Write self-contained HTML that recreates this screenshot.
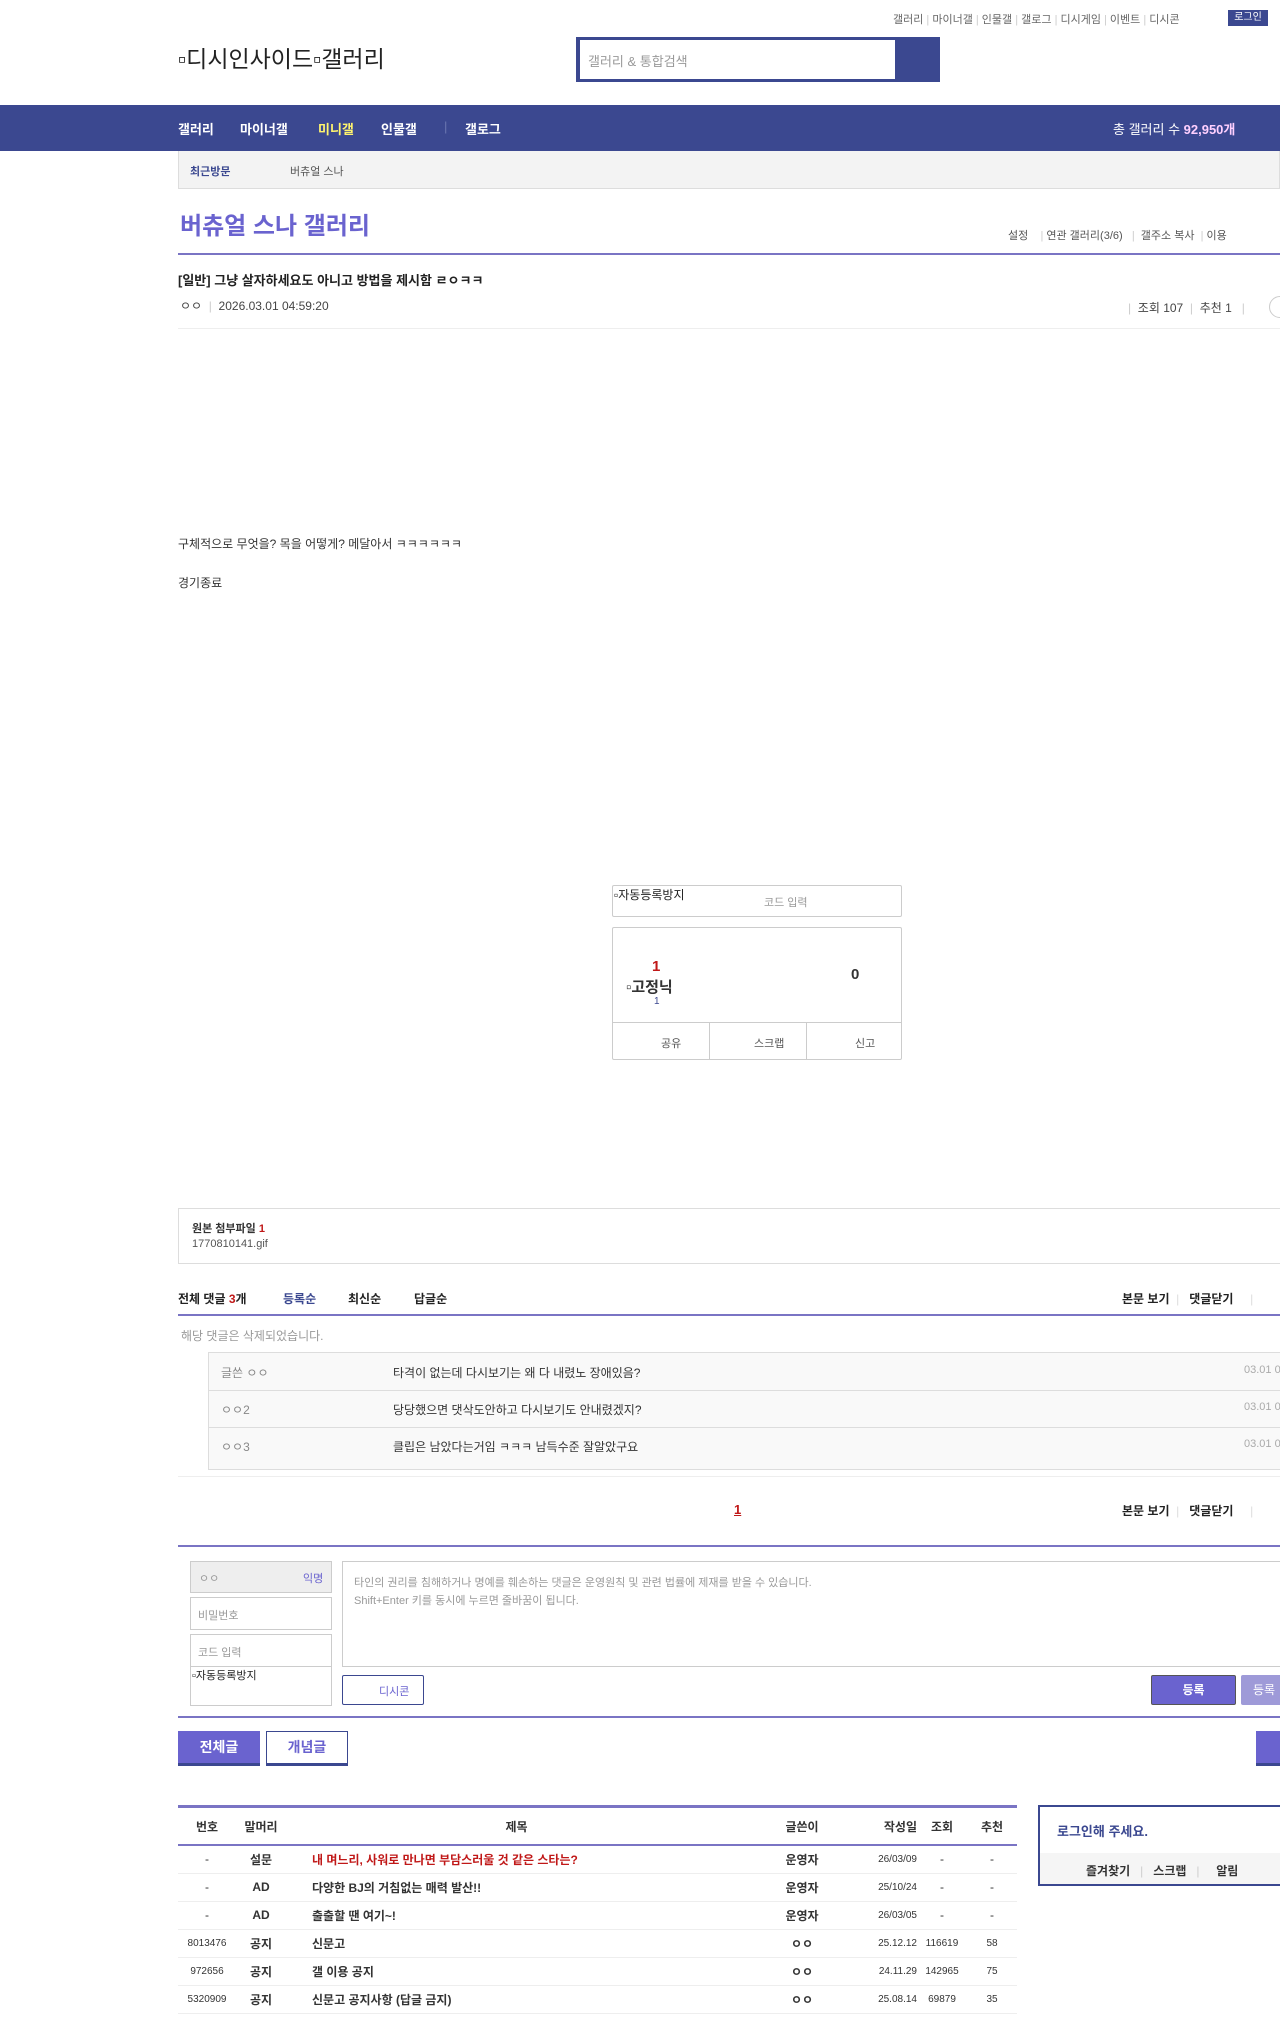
<!DOCTYPE html>
<html><head><meta charset="utf-8"><style>
*{margin:0;padding:0;box-sizing:border-box}
body{width:1280px;height:2026px;overflow:hidden;background:#fff;font-family:"Liberation Sans","Noto Sans CJK KR",sans-serif;color:#333;font-size:12px;position:relative}
.a{position:absolute;white-space:nowrap}
.nav{background:#3b4890;top:105px;left:0;width:1280px;height:46px}
.nav span{position:absolute;top:14px;color:#fff;font-weight:bold;font-size:13px}
.tbl td{height:28px;border-bottom:1px solid #eee;font-size:12px;text-align:center}
</style></head><body>
<div class="a" style="top:11px;left:893px;font-size:11px;color:#666">갤러리 <span style="color:#ccc">|</span> 마이너갤 <span style="color:#ccc">|</span> 인물갤 <span style="color:#ccc">|</span> 갤로그 <span style="color:#ccc">|</span> 디시게임 <span style="color:#ccc">|</span> 이벤트 <span style="color:#ccc">|</span> 디시콘</div>
<div class="a" style="top:10px;left:1228px;width:40px;height:16px;background:#3b4890;color:#fff;font-size:10px;text-align:center;line-height:16px">로그인</div>
<div class="a" style="top:40px;left:178px;font-size:23px;color:#222">▫디시인사이드▫갤러리</div>
<div class="a" style="top:37px;left:576px;width:364px;height:45px;background:#3b4890"></div>
<div class="a" style="top:40px;left:580px;width:315px;height:39px;background:#fff;font-size:13px;color:#999;padding:11px 8px">갤러리 &amp; 통합검색</div>
<div class="a nav"><span style="left:178px">갤러리</span><span style="left:240px">마이너갤</span><span style="left:318px;color:#fff46e">미니갤</span><span style="left:381px">인물갤</span><span style="left:444px;color:#6a75b0;font-weight:normal">|</span><span style="left:465px">갤로그</span><span style="left:1113px;font-weight:normal;font-size:13px">총 갤러리 수 <b style="color:#ffd0ff">92,950개</b></span></div>
<div class="a" style="top:151px;left:178px;width:1102px;height:38px;background:#f3f3f3;border:1px solid #ddd;border-top:0"></div>
<div class="a" style="top:163px;left:190px;font-size:11px;color:#3b4890;font-weight:bold">최근방문</div>
<div class="a" style="top:163px;left:290px;font-size:11px;color:#555">버츄얼 스나</div>
<div class="a" style="top:206px;left:180px;font-size:24px;color:#6a63cf;font-weight:bold">버츄얼 스나 갤러리</div>
<div class="a" style="top:227px;left:1008px;font-size:11px;color:#555">설정 &nbsp;&nbsp;&nbsp;<span style="color:#ccc">|</span> 연관 갤러리(3/6) &nbsp;&nbsp;<span style="color:#ccc">|</span> &nbsp;갤주소 복사 <span style="color:#ccc">&nbsp;|</span> 이용</div>
<div class="a" style="top:253px;left:178px;width:1102px;height:2px;background:#7a74c4"></div>
<div class="a" style="top:270px;left:178px;font-size:13px;font-weight:bold;color:#222">[일반] 그냥 살자하세요도 아니고 방법을 제시함 ㄹㅇㅋㅋ</div>
<div class="a" style="top:297px;left:180px;font-size:12px;color:#444">ㅇㅇ <span style="color:#ccc">&nbsp;|&nbsp;</span> 2026.03.01 04:59:20</div>
<div class="a" style="top:299px;left:1128px;font-size:12px;color:#444"><span style="color:#ccc">|</span> &nbsp;조회 107 <span style="color:#ccc">&nbsp;|</span> &nbsp;추천 1 &nbsp;<span style="color:#ccc">&nbsp;|</span></div>
<div class="a" style="top:296px;left:1269px;width:22px;height:22px;border:1px solid #ccc;border-radius:50%"></div>
<div class="a" style="top:328px;left:178px;width:1102px;height:1px;background:#eee"></div>
<div class="a" style="top:535px;left:178px;font-size:12px;color:#333">구체적으로 무엇을? 목을 어떻게? 메달아서 ㅋㅋㅋㅋㅋㅋ</div>
<div class="a" style="top:574px;left:178px;font-size:12px;color:#333">경기종료</div>
<div class="a" style="top:885px;left:612px;width:290px;height:32px;border:1px solid #ccc;border-radius:2px"></div>
<div class="a" style="top:886px;left:614px;font-size:12px;color:#222">▫자동등록방지</div>
<div class="a" style="top:894px;left:764px;font-size:11px;color:#999">코드 입력</div>
<div class="a" style="top:927px;left:612px;width:290px;height:133px;border:1px solid #ccc;border-radius:2px"></div>
<div class="a" style="top:958px;left:652px;font-size:15px;font-weight:bold;color:#c01818">1</div>
<div class="a" style="top:976px;left:626px;font-size:15px;font-weight:bold;color:#333">▫고정닉</div>
<div class="a" style="top:996px;left:654px;font-size:10px;color:#3b4890">1</div>
<div class="a" style="top:966px;left:851px;font-size:15px;font-weight:bold;color:#333">0</div>
<div class="a" style="top:1022px;left:613px;width:288px;height:1px;background:#ccc"></div>
<div class="a" style="top:1022px;left:709px;width:1px;height:37px;background:#ccc"></div>
<div class="a" style="top:1022px;left:806px;width:1px;height:37px;background:#ccc"></div>
<div class="a" style="top:1035px;left:661px;font-size:11px;color:#555">공유</div>
<div class="a" style="top:1035px;left:754px;font-size:11px;color:#555">스크랩</div>
<div class="a" style="top:1035px;left:855px;font-size:11px;color:#555">신고</div>
<div class="a" style="top:1208px;left:178px;width:1110px;height:56px;border:1px solid #ddd"></div>
<div class="a" style="top:1220px;left:192px;font-size:11px;font-weight:bold;color:#333">원본 첨부파일 <span style="color:#c01818">1</span></div>
<div class="a" style="top:1238px;left:192px;font-size:11px;color:#555">1770810141.gif</div>
<div class="a" style="top:1290px;left:178px;font-size:12px;font-weight:bold;color:#222">전체 댓글 <span style="color:#c01818">3</span>개</div>
<div class="a" style="top:1290px;left:283px;font-size:12px;font-weight:bold;color:#3b4890">등록순</div>
<div class="a" style="top:1290px;left:348px;font-size:12px;font-weight:bold;color:#222">최신순</div>
<div class="a" style="top:1290px;left:414px;font-size:12px;font-weight:bold;color:#222">답글순</div>
<div class="a" style="top:1290px;left:1122px;font-size:12px;font-weight:bold;color:#222">본문 보기 <span style="color:#ddd;font-weight:normal">&nbsp;|&nbsp;&nbsp;</span> 댓글닫기 <span style="color:#ddd;font-weight:normal">&nbsp;&nbsp;&nbsp;&nbsp;|</span></div>
<div class="a" style="top:1314px;left:178px;width:1102px;height:2px;background:#7a74c4"></div>
<div class="a" style="top:1327px;left:181px;font-size:12px;color:#999">해당 댓글은 삭제되었습니다.</div>
<div class="a" style="top:1352px;left:208px;width:1080px;height:118px;background:#f9f9f9;border:1px solid #ddd"></div>
<div class="a" style="top:1390px;left:208px;width:1072px;height:1px;background:#ddd"></div>
<div class="a" style="top:1427px;left:208px;width:1072px;height:1px;background:#ddd"></div>
<div class="a" style="top:1364px;left:221px;font-size:12px;color:#888">글쓴 ㅇㅇ</div>
<div class="a" style="top:1401px;left:221px;font-size:12px;color:#888">ㅇㅇ2</div>
<div class="a" style="top:1438px;left:221px;font-size:12px;color:#888">ㅇㅇ3</div>
<div class="a" style="top:1364px;left:393px;font-size:12px;color:#333">타격이 없는데 다시보기는 왜 다 내렸노 장애있음?</div>
<div class="a" style="top:1401px;left:393px;font-size:12px;color:#333">당당했으면 댓삭도안하고 다시보기도 안내렸겠지?</div>
<div class="a" style="top:1438px;left:393px;font-size:12px;color:#333">클립은 남았다는거임 ㅋㅋㅋ 남득수준 잘알았구요</div>
<div class="a" style="top:1364px;left:1244px;font-size:11px;color:#aaa">03.01 0</div>
<div class="a" style="top:1401px;left:1244px;font-size:11px;color:#aaa">03.01 0</div>
<div class="a" style="top:1438px;left:1244px;font-size:11px;color:#aaa">03.01 0</div>
<div class="a" style="top:1476px;left:178px;width:1102px;height:1px;background:#eee"></div>
<div class="a" style="top:1502px;left:734px;font-size:13px;font-weight:bold;color:#c01818;text-decoration:underline">1</div>
<div class="a" style="top:1502px;left:1122px;font-size:12px;font-weight:bold;color:#222">본문 보기 <span style="color:#ddd;font-weight:normal">&nbsp;|&nbsp;&nbsp;</span> 댓글닫기 <span style="color:#ddd;font-weight:normal">&nbsp;&nbsp;&nbsp;&nbsp;|</span></div>
<div class="a" style="top:1545px;left:178px;width:1102px;height:2px;background:#7a74c4"></div>
<div class="a" style="top:1561px;left:190px;width:142px;height:32px;background:#eee;border:1px solid #ccc"></div>
<div class="a" style="top:1570px;left:199px;font-size:11px;color:#999">ㅇㅇ</div>
<div class="a" style="top:1570px;left:303px;font-size:11px;color:#6a63cf">익명</div>
<div class="a" style="top:1597px;left:190px;width:142px;height:33px;border:1px solid #ccc"></div>
<div class="a" style="top:1607px;left:198px;font-size:11px;color:#999">비밀번호</div>
<div class="a" style="top:1634px;left:190px;width:142px;height:72px;border:1px solid #ccc"></div>
<div class="a" style="top:1644px;left:198px;font-size:11px;color:#999">코드 입력</div>
<div class="a" style="top:1666px;left:191px;width:140px;height:1px;background:#ccc"></div>
<div class="a" style="top:1667px;left:192px;font-size:11px;color:#222">▫자동등록방지</div>
<div class="a" style="top:1561px;left:342px;width:950px;height:106px;border:1px solid #ccc"></div>
<div class="a" style="top:1574px;left:354px;font-size:11px;color:#999;line-height:18px">타인의 권리를 침해하거나 명예를 훼손하는 댓글은 운영원칙 및 관련 법률에 제재를 받을 수 있습니다.<br>Shift+Enter 키를 동시에 누르면 줄바꿈이 됩니다.</div>
<div class="a" style="top:1675px;left:342px;width:82px;height:30px;border:1px solid #3b4890;border-radius:2px;font-size:11px;color:#6a63cf;padding:7px 0 0 36px">디시콘</div>
<div class="a" style="top:1675px;left:1151px;width:85px;height:30px;background:#6a63cf;border:1px solid #555;border-radius:2px;font-size:12px;color:#fff;text-align:center;line-height:28px;font-weight:bold">등록</div>
<div class="a" style="top:1675px;left:1241px;width:50px;height:30px;background:#9e9ad8;border-radius:2px;font-size:12px;color:#fff;line-height:30px;padding-left:12px">등록</div>
<div class="a" style="top:1716px;left:178px;width:1102px;height:2px;background:#7a74c4"></div>
<div class="a" style="top:1731px;left:178px;width:82px;height:35px;background:#6a63cf;border-bottom:3px solid #3b4890;color:#fff;font-size:14px;font-weight:bold;text-align:center;line-height:33px">전체글</div>
<div class="a" style="top:1731px;left:266px;width:82px;height:35px;background:#fff;border:1px solid #3b4890;border-bottom:3px solid #3b4890;color:#6a63cf;font-size:14px;font-weight:bold;text-align:center;line-height:31px">개념글</div>
<div class="a" style="top:1731px;left:1256px;width:30px;height:35px;background:#6a63cf;border-bottom:3px solid #3b4890"></div>
<div class="a" style="top:1805px;left:178px;width:839px;height:3px;background:#7a74c4"></div>
<table class="a tbl" style="top:1808px;left:178px;width:839px;border-collapse:collapse">
<tr style="font-weight:bold"><td style="width:58px;height:37px;border-bottom:2px solid #7a74c4">번호</td><td style="width:50px;border-bottom:2px solid #7a74c4">말머리</td><td style="border-bottom:2px solid #7a74c4">제목</td><td style="width:110px;border-bottom:2px solid #7a74c4">글쓴이</td><td style="width:60px;border-bottom:2px solid #7a74c4;text-align:right">작성일</td><td style="width:50px;border-bottom:2px solid #7a74c4">조회</td><td style="width:50px;border-bottom:2px solid #7a74c4">추천</td></tr>
<tr><td>-</td><td><b>설문</b></td><td style="text-align:left;padding-left:26px;color:#c01818;font-weight:bold">내 며느리, 사워로 만나면 부담스러울 것 같은 스타는?</td><td><b>운영자</b></td><td style="font-size:10px;text-align:right">26/03/09</td><td>-</td><td>-</td></tr>
<tr><td>-</td><td><b>AD</b></td><td style="text-align:left;padding-left:26px;font-weight:bold">다양한 BJ의 거침없는 매력 발산!!</td><td><b>운영자</b></td><td style="font-size:10px;text-align:right">25/10/24</td><td>-</td><td>-</td></tr>
<tr><td>-</td><td><b>AD</b></td><td style="text-align:left;padding-left:26px;font-weight:bold">출출할 땐 여기~!</td><td><b>운영자</b></td><td style="font-size:10px;text-align:right">26/03/05</td><td>-</td><td>-</td></tr>
<tr><td style="font-size:10px">8013476</td><td><b>공지</b></td><td style="text-align:left;padding-left:26px;font-weight:bold">신문고</td><td><b>ㅇㅇ</b></td><td style="font-size:10px;text-align:right">25.12.12</td><td style="font-size:10px">116619</td><td style="font-size:10px">58</td></tr>
<tr><td style="font-size:10px">972656</td><td><b>공지</b></td><td style="text-align:left;padding-left:26px;font-weight:bold">갤 이용 공지</td><td><b>ㅇㅇ</b></td><td style="font-size:10px;text-align:right">24.11.29</td><td style="font-size:10px">142965</td><td style="font-size:10px">75</td></tr>
<tr><td style="font-size:10px">5320909</td><td><b>공지</b></td><td style="text-align:left;padding-left:26px;font-weight:bold">신문고 공지사항 (답글 금지)</td><td><b>ㅇㅇ</b></td><td style="font-size:10px;text-align:right">25.08.14</td><td style="font-size:10px">69879</td><td style="font-size:10px">35</td></tr>
</table>
<div class="a" style="top:1805px;left:1038px;width:250px;height:81px;border:2px solid #3b4890;background:#f5f5f5"></div>
<div class="a" style="top:1807px;left:1040px;width:248px;height:46px;background:#fff"></div>
<div class="a" style="top:1821px;left:1057px;font-size:13px;font-weight:bold;color:#3b4890">로그인해 주세요.</div>
<div class="a" style="top:1862px;left:1086px;font-size:12px;font-weight:bold;color:#333">즐겨찾기 <span style="color:#ccc;font-weight:normal">&nbsp;&nbsp;|&nbsp;&nbsp;</span> 스크랩 <span style="color:#ccc;font-weight:normal">&nbsp;&nbsp;|&nbsp;&nbsp;</span> &nbsp;&nbsp;알림</div>
</body></html>
